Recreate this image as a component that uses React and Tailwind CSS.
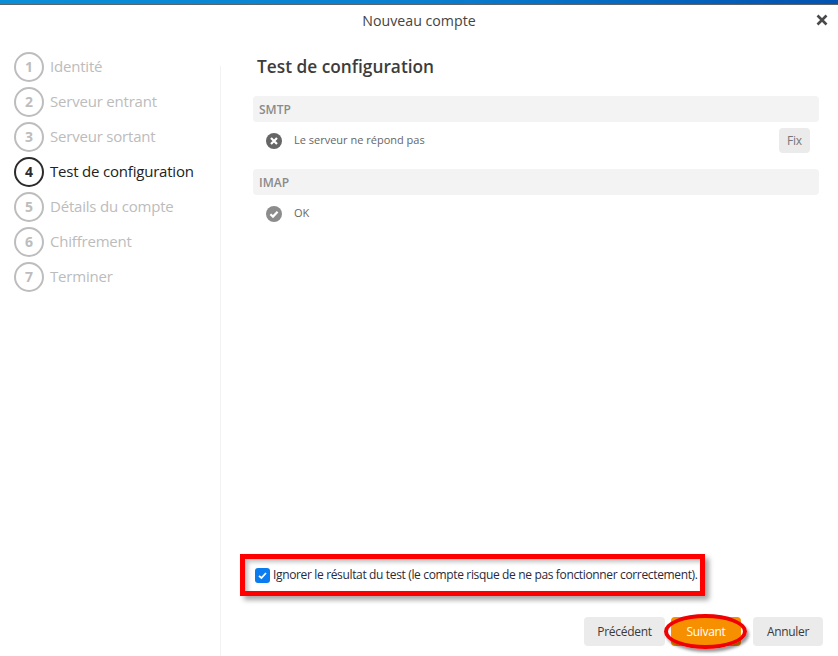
import React from "react";

const steps = ["Identité", "Serveur entrant", "Serveur sortant", "Test de configuration", "Détails du compte", "Chiffrement", "Terminer"];

function Step({ n, label, active }) {
  return (
    <div className="flex h-[35px] items-center">
      <div className={`flex h-[30px] w-[30px] shrink-0 items-center justify-center rounded-full border-[2px] text-[14px] font-bold ${active ? "border-[#2b2b2b] text-[#2b2b2b]" : "border-[#bdbdbd] text-[#bdbdbd]"}`}>{n}</div>
      <span className={`ml-[6px] whitespace-nowrap text-[15px] tracking-[-0.2px] ${active ? "text-[#222222]" : "text-[#bcbcbc]"}`}>{label}</span>
    </div>
  );
}

function SectionBar({ children }) {
  return <div className="flex h-[26px] items-center rounded-[4px] bg-[#f3f3f3] pl-[6px] pt-[2px] text-[12px] font-semibold text-[#8a8a8a]">{children}</div>;
}

export default function App() {
  return (
    <div className="flex h-[656px] w-[838px] flex-col overflow-hidden bg-white font-['Open_Sans',sans-serif]">
      <div className="h-[5px] shrink-0 border-b border-[#5f6468] bg-gradient-to-r from-[#0a8fd6] via-[#0a7fd0] to-[#0552b0]" />
      <div className="relative flex h-[31px] shrink-0 items-center justify-center text-[14.2px] text-[#444444]">
        Nouveau compte
        <svg className="absolute right-[10px] top-[9px]" width="12" height="12" viewBox="0 0 12 12"><path d="M1.5 1.5 10.5 10.5M10.5 1.5 1.5 10.5" stroke="#4a4a4a" strokeWidth="2.6" /></svg>
      </div>
      <div className="flex min-h-0 flex-1">
        <div className="relative w-[221px] shrink-0 pl-[14px] pt-[13px]">
          {steps.map((s, i) => <Step key={s} n={i + 1} label={s} active={i === 3} />)}
          <div className="absolute bottom-0 right-0 top-[30px] w-px bg-[#f3f3f3]" />
        </div>
        <div className="flex min-w-0 flex-1 flex-col pl-[32px] pr-[19px]">
          <h1 className="mt-[19px] h-[24px] pl-[4px] text-[17.3px] font-semibold leading-[24px] text-[#3c3c3c]">Test de configuration</h1>
          <div className="mt-[17px]">
            <SectionBar>SMTP</SectionBar>
            <div className="flex h-[37px] items-center pl-[13px] pr-[9px] text-[11px] text-[#666666]">
              <svg width="16" height="16" viewBox="0 0 16 16"><circle cx="8" cy="8" r="8" fill="#666666" /><path d="M5 5 11 11M11 5 5 11" stroke="#ffffff" strokeWidth="2.2" /></svg>
              <span className="ml-[12px] flex-1">Le serveur ne répond pas</span>
              <div className="flex h-[25px] w-[31px] items-center justify-center rounded-[4px] bg-[#ebebeb] text-[12px] tracking-[-0.2px] text-[#777777]">Fix</div>
            </div>
          </div>
          <div className="mt-[10px]">
            <SectionBar>IMAP</SectionBar>
            <div className="flex h-[37px] items-center pl-[13px] text-[11px] text-[#666666]">
              <svg width="16" height="16" viewBox="0 0 16 16"><circle cx="8" cy="8" r="8" fill="#8c8c8c" /><path d="M4.4 8.2 7 10.6 11.6 5.8" fill="none" stroke="#ffffff" strokeWidth="2.2" /></svg>
              <span className="ml-[12px]">OK</span>
            </div>
          </div>
          <div className="mt-auto ml-[-13px] flex h-[42px] w-[465px] items-center border-[5px] border-[#ff0000] pl-[10px] text-[12px] shadow-[4px_4px_5px_rgba(0,0,0,0.35),inset_3px_3px_4px_rgba(0,0,0,0.25)]">
            <div className="flex h-[15px] w-[15px] shrink-0 items-center justify-center rounded-[3px] bg-[#0a7cf0]">
              <svg width="11" height="11" viewBox="0 0 11 11"><path d="M2 5.8 4.4 8 9 3" fill="none" stroke="#ffffff" strokeWidth="1.8" /></svg>
            </div>
            <span className="ml-[3px] whitespace-nowrap tracking-[-0.35px] text-[#2a2a3a]">Ignorer le résultat du test (le compte risque de ne pas fonctionner correctement).</span>
          </div>
          <div className="mb-[10px] mr-[-4px] mt-[21px] flex h-[29px] items-center justify-end text-[12px] tracking-[-0.3px]">
            <div className="flex h-[29px] w-[81px] items-center justify-center rounded-[4px] bg-[#ebebeb] text-[#3a3a3a]">Précédent</div>
            <div className="relative ml-[6px] flex h-[29px] w-[70px] items-center justify-center rounded-[4px] bg-[#f79000] text-white">
              Suivant
              <div className="absolute left-[-7px] top-[-3px] h-[35px] w-[83px] rounded-[50%] border-[4px] border-[#f00000] shadow-[2px_3px_3px_rgba(0,0,0,0.4)]" />
            </div>
            <div className="ml-[12px] flex h-[29px] w-[70px] items-center justify-center rounded-[4px] bg-[#ebebeb] text-[#3a3a3a]">Annuler</div>
          </div>
        </div>
      </div>
    </div>
  );
}
